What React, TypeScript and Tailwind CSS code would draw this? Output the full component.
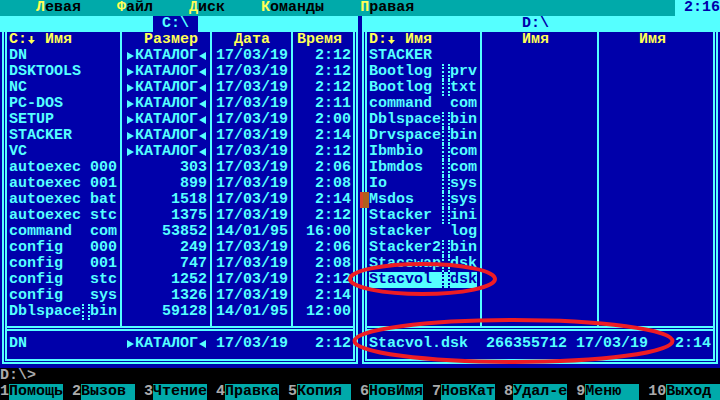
import React from 'react';

type Entry = {
  n: string;
  e?: string;
  dir?: boolean;
  size?: string;
  date?: string;
  time?: string;
  mark?: boolean;
  sel?: boolean;
};

const leftFiles: Entry[] = [
  { n: 'DN', dir: true, date: '17/03/19', time: '2:12' },
  { n: 'DSKTOOLS', dir: true, date: '17/03/19', time: '2:12' },
  { n: 'NC', dir: true, date: '17/03/19', time: '2:12' },
  { n: 'PC-DOS', dir: true, date: '17/03/19', time: '2:11' },
  { n: 'SETUP', dir: true, date: '17/03/19', time: '2:00' },
  { n: 'STACKER', dir: true, date: '17/03/19', time: '2:14' },
  { n: 'VC', dir: true, date: '17/03/19', time: '2:12' },
  { n: 'autoexec', e: '000', size: '303', date: '17/03/19', time: '2:06' },
  { n: 'autoexec', e: '001', size: '899', date: '17/03/19', time: '2:08' },
  { n: 'autoexec', e: 'bat', size: '1518', date: '17/03/19', time: '2:14' },
  { n: 'autoexec', e: 'stc', size: '1375', date: '17/03/19', time: '2:12' },
  { n: 'command', e: 'com', size: '53852', date: '14/01/95', time: '16:00' },
  { n: 'config', e: '000', size: '249', date: '17/03/19', time: '2:06' },
  { n: 'config', e: '001', size: '747', date: '17/03/19', time: '2:08' },
  { n: 'config', e: 'stc', size: '1252', date: '17/03/19', time: '2:12' },
  { n: 'config', e: 'sys', size: '1326', date: '17/03/19', time: '2:14' },
  { n: 'Dblspace', e: 'bin', mark: true, size: '59128', date: '14/01/95', time: '12:00' },
];

const rightFiles: Entry[] = [
  { n: 'STACKER' },
  { n: 'Bootlog', e: 'prv', mark: true },
  { n: 'Bootlog', e: 'txt', mark: true },
  { n: 'command', e: 'com' },
  { n: 'Dblspace', e: 'bin', mark: true },
  { n: 'Drvspace', e: 'bin', mark: true },
  { n: 'Ibmbio', e: 'com', mark: true },
  { n: 'Ibmdos', e: 'com', mark: true },
  { n: 'Io', e: 'sys', mark: true },
  { n: 'Msdos', e: 'sys', mark: true },
  { n: 'Stacker', e: 'ini', mark: true },
  { n: 'stacker', e: 'log' },
  { n: 'Stacker2', e: 'bin', mark: true },
  { n: 'Stacswap', e: 'dsk', mark: true },
  { n: 'Stacvol', e: 'dsk', mark: true, sel: true },
];

const keys = ['Помощь', 'Вызов', 'Чтение', 'Правка', 'Копия', 'НовИмя', 'НовКат', 'Удал-е', 'Меню', 'Выход'];

const Tri = ({ right }: { right?: boolean }) => (
  <svg width="9" height="16" viewBox="0 0 9 16" className="shrink-0">
    <polygon points={right ? '1,4 8,8 1,12' : '8,4 1,8 8,12'} fill="#55ffff" />
  </svg>
);

const Down = () => (
  <svg width="9" height="16" viewBox="0 0 9 16" className="shrink-0">
    <rect x="3.5" y="4" width="2" height="4" fill="#ffff55" />
    <polygon points="1,8 8,8 4.5,12" fill="#ffff55" />
  </svg>
);

const Strip = ({ sel }: { sel?: boolean }) => (
  <span className="flex h-4 w-[9px]">
    <span className={sel ? 'ml-[1px] h-full w-[8px] border-x-2 border-dotted border-[#0000aa]' : 'ml-[1px] h-full w-[8px] border-x-2 border-dotted border-[#55ffff]'} />
  </span>
);

const Sep = () => <div className="ml-[3px] mr-[4px] w-[2px] bg-[#55ffff]" />;

function Name({ f }: { f: Entry }) {
  return (
    <div className={f.sel ? 'flex h-4 w-[108px] bg-[#55ffff] text-[#0000aa]' : 'flex h-4 w-[108px]'}>
      <span className="w-[72px] whitespace-pre">{f.n}</span>
      {f.mark ? <Strip sel={f.sel} /> : <span className="w-[9px]" />}
      <span className="w-[27px]">{f.e}</span>
    </div>
  );
}

function Frame({ top, list, status }: { top: React.ReactNode; list: React.ReactNode; status: React.ReactNode }) {
  return (
    <div className="w-[360px] bg-[#0000aa] text-[#55ffff]">
      {top}
      <div className="h-[336px] px-[2px] pb-[4px]">
        <div className="h-full border-x-2 border-b-2 border-[#55ffff] px-[1px] pb-[1px]">
          <div className="flex h-full flex-col border-x-2 border-b-2 border-[#55ffff] px-[2px]">
            <div className="flex h-[294px]">{list}</div>
            <div className="-mx-[2px] h-[5px] border-y-2 border-[#55ffff]" />
            <div className="h-[5px]" />
            <div className="flex h-4 whitespace-pre">{status}</div>
          </div>
        </div>
      </div>
    </div>
  );
}

function LeftPanel() {
  return (
    <Frame
      top={
        <div className="mr-[2px] flex h-4 bg-[#55ffff] pl-[153px]">
          <div className="w-[45px] bg-[#0000aa] text-center text-[#55ffff]">C:\</div>
        </div>
      }
      list={
        <>
          <div className="w-[108px]">
            <div className="flex h-4 whitespace-pre text-[#ffff55]">
              <span>C:</span>
              <Down />
              <span> Имя</span>
            </div>
            {leftFiles.map((f, i) => (
              <Name key={i} f={f} />
            ))}
          </div>
          <Sep />
          <div className="w-[81px]">
            <div className="h-4 pl-[18px] text-[#ffff55]">Размер</div>
            {leftFiles.map((f, i) =>
              f.dir ? (
                <div key={i} className="flex h-4">
                  <Tri right />
                  <span>КАТАЛОГ</span>
                  <Tri />
                </div>
              ) : (
                <div key={i} className="h-4 text-right">{f.size}</div>
              )
            )}
          </div>
          <Sep />
          <div className="w-[72px]">
            <div className="h-4 pl-[18px] text-[#ffff55]">Дата</div>
            {leftFiles.map((f, i) => (
              <div key={i} className="h-4">{f.date}</div>
            ))}
          </div>
          <Sep />
          <div className="w-[54px]">
            <div className="h-4 text-[#ffff55]">Время</div>
            {leftFiles.map((f, i) => (
              <div key={i} className="h-4 text-right">{f.time}</div>
            ))}
          </div>
        </>
      }
      status={
        <>
          <span className="w-[117px]">DN</span>
          <Tri right />
          <span>КАТАЛОГ</span>
          <Tri />
          <span> 17/03/19   2:12</span>
        </>
      }
    />
  );
}

function RightPanel() {
  return (
    <Frame
      top={
        <div className="ml-[2px] flex h-4 bg-[#55ffff] pl-[151px]">
          <div className="w-[45px] text-center text-[#0000aa]">D:\</div>
        </div>
      }
      list={
        <>
          <div className="w-[108px]">
            <div className="flex h-4 whitespace-pre text-[#ffff55]">
              <span>D:</span>
              <Down />
              <span> Имя</span>
            </div>
            {rightFiles.map((f, i) => (
              <Name key={i} f={f} />
            ))}
          </div>
          <Sep />
          <div className="w-[108px]">
            <div className="h-4 pl-[36px] text-[#ffff55]">Имя</div>
          </div>
          <Sep />
          <div className="w-[108px]">
            <div className="h-4 pl-[36px] text-[#ffff55]">Имя</div>
          </div>
        </>
      }
      status={<span>Stacvol.dsk  266355712 17/03/19   2:14</span>}
    />
  );
}

export default function App() {
  const menu = [
    ['Л', 'евая'],
    ['Ф', 'айл'],
    ['Д', 'иск'],
    ['К', 'оманды'],
    ['П', 'равая'],
  ];
  return (
    <div className="relative h-[400px] w-[720px] overflow-hidden bg-black font-['Liberation_Mono','DejaVu_Sans_Mono',monospace] text-[15px] font-bold leading-4">
      {/* menu bar */}
      <div className="flex h-4">
        <div className="flex flex-1 gap-[36px] bg-[#00aaaa] pl-[36px] text-black">
          {menu.map(([a, b]) => (
            <span key={a}>
              <span className="text-[#ffff55]">{a}</span>
              {b}
            </span>
          ))}
        </div>
        <div className="w-[45px] bg-[#55ffff] text-right text-[#0000aa]">2:16</div>
      </div>

      {/* panels */}
      <div className="flex">
        <LeftPanel />
        <RightPanel />
      </div>

      {/* prompt */}
      <div className="h-4 whitespace-pre text-[#aaaaaa]">D:\&gt;</div>

      {/* key bar */}
      <div className="flex h-4">
        {keys.map((k, i) => (
          <div key={k} className="flex">
            <span className="text-[#aaaaaa]">{i + 1}</span>
            <span className="w-[54px] bg-[#00aaaa] text-black">{k}</span>
            {i < 9 && <span className="w-[9px]" />}
          </div>
        ))}
      </div>

      {/* mouse cursor */}
      <div className="absolute left-[360px] top-[192px] flex h-4 w-[9px]">
        <div className="w-[3px] bg-[#d8442a]" />
        <div className="flex-1 bg-[#b0601c]" />
      </div>

      {/* red annotations */}
      <svg className="pointer-events-none absolute inset-0" width="720" height="400" viewBox="0 0 720 400">
        <ellipse cx="422.5" cy="279" rx="72.5" ry="15" fill="none" stroke="#ee1c24" strokeWidth="4" />
        <ellipse cx="513.5" cy="341" rx="159" ry="21" fill="none" stroke="#ee1c24" strokeWidth="4" />
      </svg>
    </div>
  );
}
